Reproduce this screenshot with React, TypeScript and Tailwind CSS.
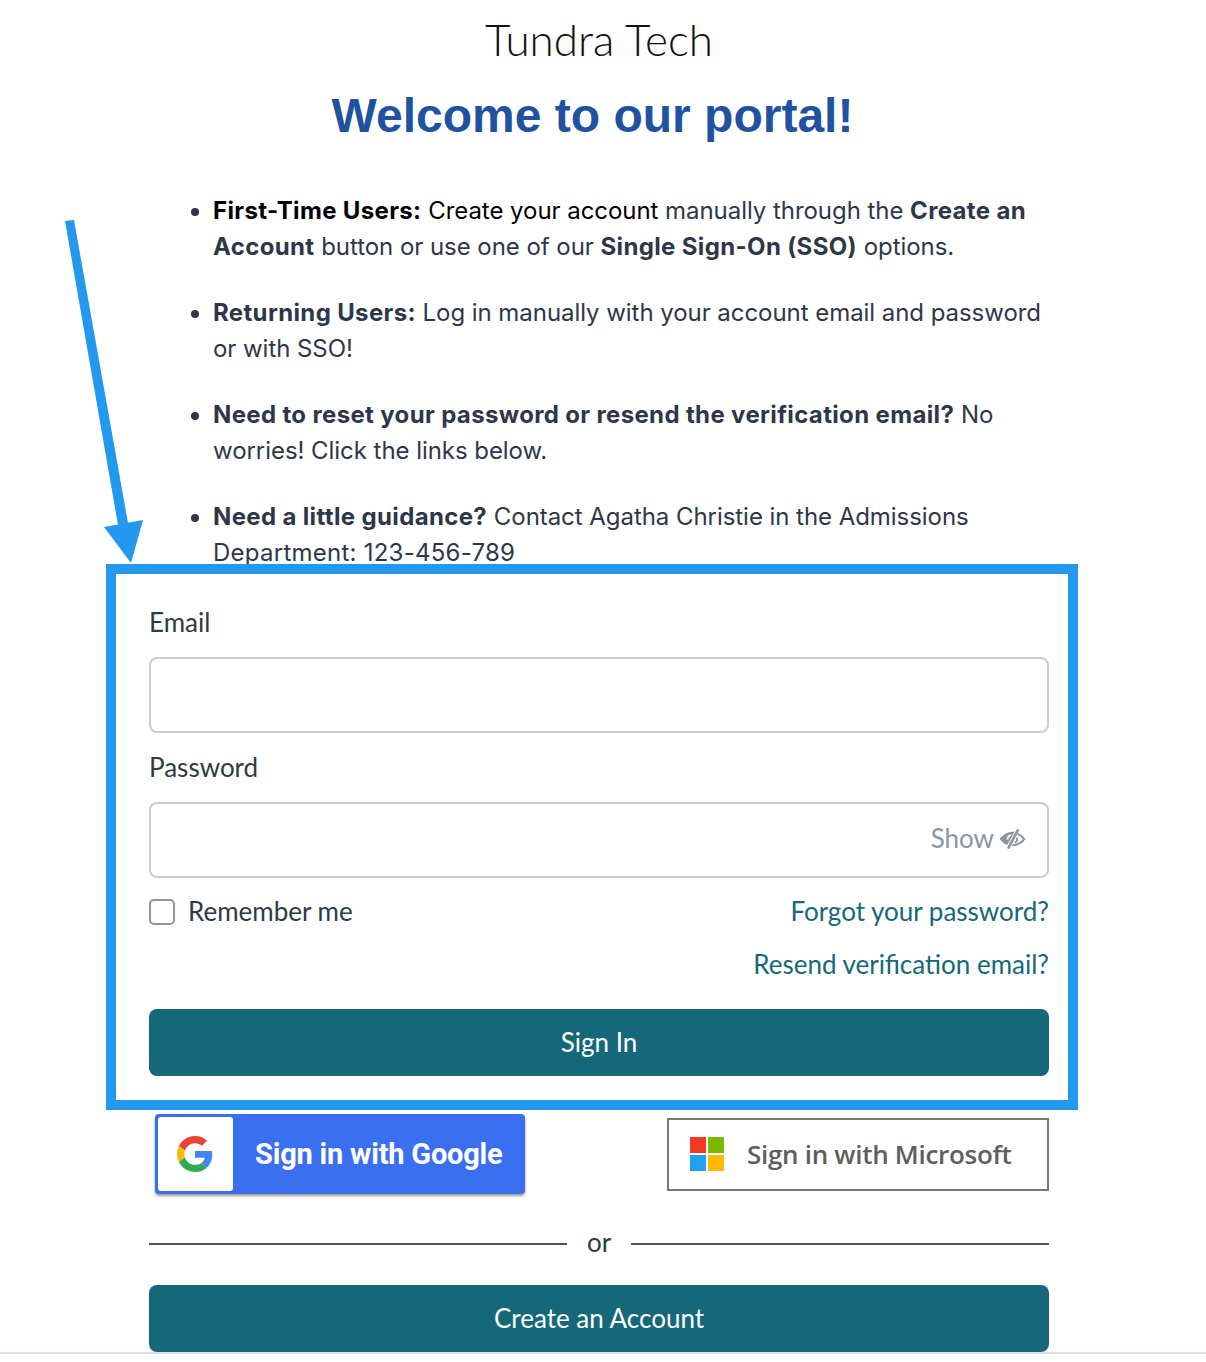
const boldCls = "font-bold tracking-[0.35px]";

const items = [
  <><b className="font-bold tracking-[0.35px] text-black">First-Time Users:</b> <span className="text-black">Create your account</span> manually through the <b className={boldCls}>Create an Account</b> button or use one of our <b className={boldCls}>Single Sign-On (SSO)</b> options.</>,
  <><b className={boldCls}>Returning Users:</b> Log in manually with your account email and password or with SSO!</>,
  <><b className={boldCls}>Need to reset your password or resend the verification email?</b> No worries! Click the links below.</>,
  <><b className={boldCls}>Need a little guidance?</b> Contact Agatha Christie in the Admissions <span className="tracking-[0.25px]">Department: 123-456-789</span></>,
];

function GoogleG() {
  return (
    <svg className="-ml-[2px]" width="36" height="36" viewBox="0 0 48 48">
      <path fill="#EA4335" d="M24 9.5c3.54 0 6.71 1.22 9.21 3.6l6.85-6.85C35.9 2.38 30.47 0 24 0 14.62 0 6.51 5.38 2.56 13.22l7.98 6.19C12.43 13.72 17.74 9.5 24 9.5z" />
      <path fill="#4285F4" d="M46.98 24.55c0-1.57-.15-3.09-.38-4.55H24v9.02h12.94c-.58 2.96-2.26 5.48-4.78 7.18l7.73 6c4.51-4.18 7.09-10.36 7.09-17.65z" />
      <path fill="#FBBC05" d="M10.53 28.59c-.48-1.45-.76-2.99-.76-4.59s.27-3.14.76-4.59l-7.98-6.19C.92 16.46 0 20.12 0 24c0 3.88.92 7.54 2.56 10.78l7.97-6.19z" />
      <path fill="#34A853" d="M24 48c6.48 0 11.93-2.13 15.89-5.81l-7.73-6c-2.15 1.45-4.92 2.3-8.16 2.3-6.26 0-11.57-4.22-13.47-9.91l-7.98 6.19C6.51 42.62 14.62 48 24 48z" />
    </svg>
  );
}

function MicrosoftLogo() {
  return (
    <div className="grid grid-cols-[16px_16px] grid-rows-[16px_16px] gap-[2px] w-[34px] h-[34px]">
      <div className="bg-[#f03a24]" />
      <div className="bg-[#7ab800]" />
      <div className="bg-[#22a0f0]" />
      <div className="bg-[#ffb900]" />
    </div>
  );
}

function EyeIcon() {
  return (
    <svg className="ml-[5px]" width="27" height="20" viewBox="0 0 27 20">
      <path fill="#8b969e" d="M16 2.5C9 2.2 3.5 6 .8 10c1.6 2.5 4.2 4.8 7.6 6.1L15.8 2.5z" />
      <path fill="none" stroke="#fff" strokeWidth="1.8" d="M12.2 6.2a4 4 0 0 0-3.6 4.4" />
      <path fill="none" stroke="#8b969e" strokeWidth="2.6" strokeLinecap="round" d="M18.8 1.4 9.6 18.6" />
      <path fill="none" stroke="#8b969e" strokeWidth="2" d="M18.6 5c2.9 1 5.2 2.9 6.6 5-2.2 3.4-6.6 6-11.7 6.2" />
      <path fill="none" stroke="#8b969e" strokeWidth="1.8" d="M17.6 8.6c.9 1.9.2 4-1.6 5" />
    </svg>
  );
}

export default function App() {
  return (
    <div className="relative w-[1206px] h-[1362px] bg-white overflow-hidden font-['Lato',sans-serif] text-[#2d3748]">
      <svg className="absolute left-[60px] top-[215px] pointer-events-none" width="90" height="352" viewBox="0 0 90 352">
        <polygon points="5,6 14,5 68,308 58,310" fill="#2299ee" />
        <polygon points="44,312 83,305 71,348" fill="#2299ee" />
      </svg>

      <div className="w-[900px] ml-[149px]">
        <h1 className="pt-[12px] h-[67px] text-center text-[44px] leading-[54px] font-light text-[#111]">Tundra Tech</h1>
        <h2 className="-ml-[13px] h-[124px] pt-[20px] text-center font-['Liberation_Sans',sans-serif] text-[48px] leading-[58px] font-bold text-[#1f52a0]">Welcome to our portal!</h2>

        <div className="h-[373px] pt-[2px] overflow-hidden font-['Inter',sans-serif] text-[24px] leading-[36px] tracking-[-0.05px] text-[#2d3748]">
          <ul className="pl-[64px] list-disc flex flex-col gap-[30px]">
            {items.map((it, i) => (
              <li key={i}>{it}</li>
            ))}
          </ul>
        </div>

        <div className="-ml-[43px] w-[972px] h-[546px] border-[10px] border-[#2299ee] pl-[33px] pr-[19px] pt-[30px] bg-white text-[26px]">
          <div className="leading-[36px] h-[36px] text-[#2d3b45]">Email</div>
          <div className="mt-[17px] h-[76px] rounded-[8px] border-2 border-[#c7cdd1]" />
          <div className="mt-[16px] leading-[36px] h-[36px] text-[#2d3b45]">Password</div>
          <div className="mt-[17px] h-[76px] rounded-[8px] border-2 border-[#c7cdd1] flex items-center justify-end pr-[21px] pb-[3px] text-[#8b969e]">
            <span>Show</span>
            <EyeIcon />
          </div>
          <div className="mt-[16px] flex items-center justify-between leading-[36px] h-[36px]">
            <div className="flex items-center gap-[13px]">
              <span className="w-[26px] h-[26px] rounded-[5px] border-2 border-[#8b969e] bg-white" />
              <span className="mb-[2px] text-[#2d3b45]">Remember me</span>
            </div>
            <a className="mb-[2px] text-[#156878]">Forgot your password?</a>
          </div>
          <div className="mt-[16px] text-right leading-[36px] h-[36px] text-[#156878]">Resend verification email?</div>
          <button className="mt-[27px] block w-full h-[67px] rounded-[8px] bg-[#156878] text-white text-center">Sign In</button>
        </div>

        <div className="flex justify-between items-center pt-[4px] pl-[6px] h-[84px]">
          <div className="flex w-[370px] h-[80px] rounded-[4px] bg-[#3a6ff2] p-[3px] pr-0 shadow-[0_2px_3px_rgba(0,0,0,0.4)]">
            <div className="w-[75px] h-full bg-white rounded-[3px] flex items-center justify-center">
              <GoogleG />
            </div>
            <span className="flex-1 pl-[22px] pt-[2px] flex items-center text-white font-['Roboto',sans-serif] font-bold text-[29px] tracking-[-0.2px]">Sign in with Google</span>
          </div>
          <div className="flex items-center w-[382px] h-[73px] border-2 border-[#77777b] bg-white pl-[21px] gap-[23px]">
            <MicrosoftLogo />
            <span className="font-['Open_Sans',sans-serif] font-semibold text-[26px] tracking-[-0.3px] text-[#5e5e5e]">Sign in with Microsoft</span>
          </div>
        </div>

        <div className="mt-[34px] h-[32px] flex items-center text-[26px] text-[#2d3b45]">
          <div className="flex-1 h-[2px] bg-[#4a555c]" />
          <span className="px-[20px] mb-[4px]">or</span>
          <div className="flex-1 h-[2px] bg-[#4a555c]" />
        </div>

        <button className="mt-[25px] block w-full h-[67px] rounded-[8px] bg-[#156878] text-white text-center text-[26px]">Create an Account</button>
      </div>
      <div className="h-[2px] bg-[#e0e0e8]" />
    </div>
  );
}
